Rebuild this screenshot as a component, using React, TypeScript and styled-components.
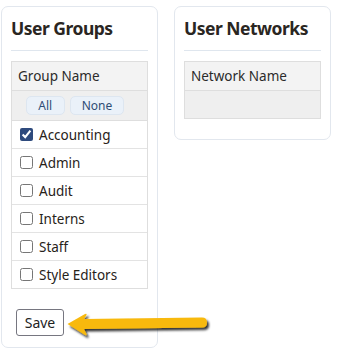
import React from "react"
import styled, { createGlobalStyle } from "styled-components"

const GlobalStyle = createGlobalStyle`
  body {
    margin: 0;
    font-family: "Noto Sans", "Open Sans", sans-serif;
    color: #222;
    background: #fff;
  }
`

const groups = [
  { name: "Accounting", checked: true },
  { name: "Admin", checked: false },
  { name: "Audit", checked: false },
  { name: "Interns", checked: false },
  { name: "Staff", checked: false },
  { name: "Style Editors", checked: false },
]

export default function App() {
  return (
    <>
      <GlobalStyle />
      <Page>
        <Card>
          <Title>User Groups</Title>
          <Table>
            <HeadRow>Group Name</HeadRow>
            <ToolRow>
              <Pill>All</Pill>
              <Pill>None</Pill>
            </ToolRow>
            {groups.map(({ name, checked }) => (
              <Row key={name}>
                <Check type="checkbox" defaultChecked={checked} />
                {name}
              </Row>
            ))}
          </Table>
          <Footer>
            <SaveButton>Save</SaveButton>
            <Arrow width="150" height="32" viewBox="0 0 150 32">
              <defs>
                <filter id="sh" x="-10%" y="-30%" width="130%" height="180%">
                  <feDropShadow dx="2" dy="2.5" stdDeviation="0.9" floodColor="#000" floodOpacity="0.8" />
                </filter>
              </defs>
              <path
                filter="url(#sh)"
                d="M1.5 15 L19 5 Q21 4 20.5 6 L18 10 L136 8.5 Q141 8.5 141 13.5 Q141 18.5 136 18.5 L18 20 L20.5 25 Q21 27 19 26 Z"
                fill="#f8b90c"
              />
            </Arrow>
          </Footer>
        </Card>
        <Card $short>
          <Title>User Networks</Title>
          <Table>
            <HeadRow>Network Name</HeadRow>
            <EmptyRow />
          </Table>
        </Card>
      </Page>
    </>
  )
}

const Page = styled.div`
  display: flex;
  align-items: flex-start;
  gap: 16px;
  padding: 6px 0 0 1px;
`

const Card = styled.section<{ $short?: boolean }>`
  position: relative;
  width: 157px;
  box-sizing: border-box;
  border: 1px solid #e2e7ee;
  border-radius: 7px;
  padding: 9px 9px ${(p) => (p.$short ? "20px" : "11px")};
`

const Title = styled.h2`
  margin: 0 0 10px;
  padding: 0 0 10px;
  border-bottom: 1px solid #dfe6ee;
  font-size: 17.5px;
  font-weight: 700;
  color: #2a2622;
  letter-spacing: -0.5px;
  line-height: 24px;
`

const Table = styled.div`
  border: 1px solid #dedede;
`

const HeadRow = styled.div`
  height: 28px;
  display: flex;
  align-items: center;
  padding-left: 6px;
  background: #f3f3f3;
  border-bottom: 1px solid #dedede;
  font-size: 13.5px;
  color: #2b2b2b;
`

const ToolRow = styled.div`
  height: 29px;
  display: flex;
  align-items: center;
  justify-content: center;
  gap: 5px;
  padding-right: 9px;
  background: #efefef;
  border-bottom: 1px solid #dedede;
`

const Pill = styled.button`
  height: 19px;
  min-width: 39px;
  padding: 0 11px;
  border: 1px solid #dde6f0;
  border-radius: 5px;
  background: #eaf1f9;
  color: #2f4d75;
  font-family: inherit;
  font-size: 12px;
  line-height: 17px;
`

const Row = styled.label`
  height: 27px;
  display: flex;
  align-items: center;
  gap: 6px;
  padding-left: 8px;
  border-bottom: 1px solid #e3e3e3;
  font-size: 13.5px;
  color: #272219;
  &:last-child {
    border-bottom: none;
  }
`

const Check = styled.input`
  width: 13px;
  height: 13px;
  margin: 0;
  accent-color: #2e4a7d;
`

const EmptyRow = styled.div`
  height: 27px;
  background: #efefef;
`

const Footer = styled.div`
  position: relative;
  padding: 20px 0 0 5px;
`

const SaveButton = styled.button`
  height: 27px;
  width: 48px;
  border: 1px solid #767680;
  border-radius: 3px;
  background: #fff;
  color: #222;
  font-family: inherit;
  font-size: 14px;
  padding: 0;
`

const Arrow = styled.svg`
  position: absolute;
  left: 55px;
  top: 20px;
  overflow: visible;
`
